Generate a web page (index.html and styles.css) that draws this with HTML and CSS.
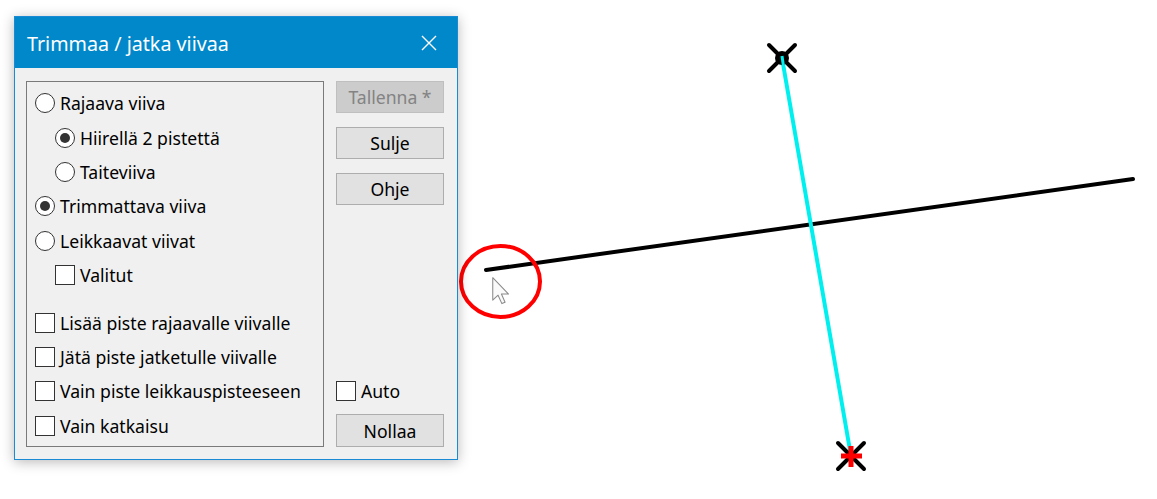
FILE: index.html
```html
<!DOCTYPE html>
<html lang="fi">
<head>
    <meta charset="UTF-8">
    <title>Trimmaa / jatka viivaa</title>
    <link rel="stylesheet" href="styles.css">
</head>
<body>
    <svg class="drawing" width="1157" height="499" viewBox="0 0 1157 499">
        <!-- trimmed line and the cutting line -->
        <line x1="486" y1="270" x2="1133" y2="179" stroke="#000" stroke-width="4" stroke-linecap="round"/>
        <line x1="782" y1="58" x2="851" y2="456" stroke="#00f0f0" stroke-width="4"/>

        <!-- start marker -->
        <g stroke="#000" stroke-width="4" stroke-linecap="round">
            <line x1="769" y1="45" x2="795" y2="71"/>
            <line x1="795" y1="45" x2="769" y2="71"/>
        </g>
        <circle cx="782" cy="58" r="7" fill="#000"/>
        <line x1="782" y1="56" x2="784" y2="70" stroke="#00f0f0" stroke-width="3"/>

        <!-- end marker -->
        <g stroke="#000" stroke-width="4" stroke-linecap="round">
            <line x1="838" y1="443" x2="864" y2="469"/>
            <line x1="864" y1="443" x2="838" y2="469"/>
        </g>
        <g stroke="#ff0000" stroke-width="5">
            <line x1="841" y1="456" x2="862" y2="456"/>
            <line x1="851" y1="446" x2="851" y2="467"/>
        </g>

        <!-- highlight -->
        <ellipse cx="500.5" cy="281.5" rx="39.5" ry="35.5" fill="none" stroke="#f00" stroke-width="4"/>
    </svg>

    <svg class="pointer" width="19" height="28" viewBox="0 0 13.5 20">
        <path d="M0.5 0.5 L0.5 16.5 L4.3 13 L7 19 L9.3 18 L6.7 12.2 L11.8 12.2 Z" fill="#fafafa" stroke="#8a8a8a" stroke-width="0.75" stroke-linejoin="round"/>
    </svg>

    <div class="dialog">
        <div class="titlebar">
            <span class="title">Trimmaa / jatka viivaa</span>
            <svg class="close" width="16" height="16" viewBox="0 0 16 16">
                <path d="M1 1 L15 15 M15 1 L1 15" stroke="#fff" stroke-width="1.4"/>
            </svg>
        </div>
        <div class="content">
            <div class="group">
                <div class="row"><span class="radio"></span>Rajaava viiva</div>
                <div class="row sub"><span class="radio on"></span>Hiirellä 2 pistettä</div>
                <div class="row sub"><span class="radio"></span>Taiteviiva</div>
                <div class="row"><span class="radio on"></span>Trimmattava viiva</div>
                <div class="row"><span class="radio"></span>Leikkaavat viivat</div>
                <div class="row sub"><span class="check"></span>Valitut</div>
                <div class="spacer"></div>
                <div class="row"><span class="check"></span>Lisää piste rajaavalle viivalle</div>
                <div class="row"><span class="check"></span>Jätä piste jatketulle viivalle</div>
                <div class="row"><span class="check"></span>Vain piste leikkauspisteeseen</div>
                <div class="row"><span class="check"></span>Vain katkaisu</div>
            </div>
            <div class="side">
                <button class="btn" disabled>Tallenna *</button>
                <button class="btn">Sulje</button>
                <button class="btn">Ohje</button>
                <div class="spacer"></div>
                <div class="row"><span class="check"></span>Auto</div>
                <button class="btn last">Nollaa</button>
            </div>
        </div>
    </div>
</body>
</html>
```

FILE: styles.css
```css
* {
    box-sizing: border-box;
}
body {
    margin: 0;
    width: 1157px;
    height: 499px;
    background: #fff;
    font-family: "Noto Sans", "Open Sans", sans-serif;
    position: relative;
    overflow: hidden;
}
.drawing {
    position: absolute;
    left: 0;
    top: 0;
}
.pointer {
    position: absolute;
    left: 492px;
    top: 277px;
}
.dialog {
    position: absolute;
    left: 14px;
    top: 16px;
    width: 444px;
    height: 444px;
    border: 1px solid #1a8ad4;
    background: #f0f0f0;
    box-shadow: 0 2px 12px rgba(0,0,0,0.28);
    display: flex;
    flex-direction: column;
}
.titlebar {
    height: 51px;
    flex: none;
    background: #0088ca;
    color: #fff;
    display: flex;
    align-items: center;
    justify-content: space-between;
    padding: 0 20px 0 12px;
}
.title {
    font-size: 19.7px;
    padding-top: 1px;
}
.close {
    margin-top: 1px;
}
.content {
    flex: 1;
    display: flex;
    gap: 12px;
    padding: 13px 13px 12px 11px;
}
.group {
    width: 298px;
    flex: none;
    border: 1px solid #7a7a7a;
    display: flex;
    flex-direction: column;
    padding: 4px 0 3px 8px;
}
.row {
    height: 34.4px;
    flex: none;
    display: flex;
    align-items: center;
    gap: 5px;
    font-size: 17.6px;
    color: #000;
    white-space: nowrap;
}
.row.sub {
    padding-left: 20px;
}
.spacer {
    flex: 1;
}
.radio, .check {
    width: 20px;
    height: 20px;
    border: 1px solid #333;
    background: #fff;
    flex: none;
    display: flex;
    align-items: center;
    justify-content: center;
}
.radio {
    border-radius: 50%;
}
.radio.on::after {
    content: "";
    width: 10px;
    height: 10px;
    border-radius: 50%;
    background: #333;
}
.side {
    width: 108px;
    flex: none;
    display: flex;
    flex-direction: column;
    gap: 14px;
}
.side .row {
    height: 26px;
    margin-bottom: -4px;
}
.btn {
    height: 32px;
    flex: none;
    background: #e1e1e1;
    border: 1px solid #adadad;
    font-family: inherit;
    font-size: 17.6px;
    color: #000;
    padding: 0;
}
.btn:disabled {
    background: #cccccc;
    border-color: #bfbfbf;
    color: #838383;
}
.btn.last {
    height: 33px;
}
```
